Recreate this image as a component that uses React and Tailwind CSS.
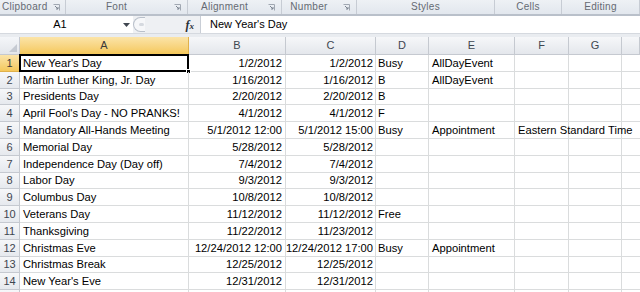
const cols = [
  { id: 'A', w: 'w-[169px]' },
  { id: 'B', w: 'w-[97px]' },
  { id: 'C', w: 'w-[90px]' },
  { id: 'D', w: 'w-[53px]' },
  { id: 'E', w: 'w-[86px]' },
  { id: 'F', w: 'w-[54px]' },
  { id: 'G', w: 'w-[53px]' },
  { id: 'H', w: 'flex-1' },
]

const rows = [
  ['New Year\'s Day', '1/2/2012', '1/2/2012', 'Busy', 'AllDayEvent', ''],
  ['Martin Luther King, Jr. Day', '1/16/2012', '1/16/2012', 'B', 'AllDayEvent', ''],
  ['Presidents Day', '2/20/2012', '2/20/2012', 'B', '', ''],
  ['April Fool\'s Day - NO PRANKS!', '4/1/2012', '4/1/2012', 'F', '', ''],
  ['Mandatory All-Hands Meeting', '5/1/2012 12:00', '5/1/2012 15:00', 'Busy', 'Appointment', 'Eastern Standard Time'],
  ['Memorial Day', '5/28/2012', '5/28/2012', '', '', ''],
  ['Independence Day (Day off)', '7/4/2012', '7/4/2012', '', '', ''],
  ['Labor Day', '9/3/2012', '9/3/2012', '', '', ''],
  ['Columbus Day', '10/8/2012', '10/8/2012', '', '', ''],
  ['Veterans Day', '11/12/2012', '11/12/2012', 'Free', '', ''],
  ['Thanksgiving', '11/22/2012', '11/23/2012', '', '', ''],
  ['Christmas Eve', '12/24/2012 12:00', '12/24/2012 17:00', 'Busy', 'Appointment', ''],
  ['Christmas Break', '12/25/2012', '12/25/2012', '', '', ''],
  ['New Year\'s Eve', '12/31/2012', '12/31/2012', '', '', ''],
]

// rows are ~16.8px tall in the screenshot, so a few get 16px
const shortRows = [2, 7, 12]

const groups = [
  { name: 'Clipboard', w: 'w-[66px]', launcher: true, align: 'justify-start pl-[2px]' },
  { name: 'Font', w: 'w-[122px]', launcher: true, align: 'justify-center' },
  { name: 'Alignment', w: 'w-[94px]', launcher: true, align: 'justify-center' },
  { name: 'Number', w: 'w-[75px]', launcher: true, align: 'justify-center' },
  { name: 'Styles', w: 'w-[138px]', launcher: false, align: 'justify-center' },
  { name: 'Cells', w: 'w-[67px]', launcher: false, align: 'justify-center' },
  { name: 'Editing', w: 'flex-1', launcher: false, align: 'justify-center' },
]

function Launcher() {
  return (
    <svg width="7" height="7" viewBox="0 0 7 7" className="shrink-0">
      <path d="M0.5 0.5h6v6" fill="none" stroke="#a0a7b1" />
      <path d="M2 2l3 3M3 5h2V3" fill="none" stroke="#7d8591" />
    </svg>
  )
}

export default function App() {
  return (
    <div className="w-[640px] h-[292px] overflow-hidden bg-white font-['Liberation_Sans',Arial,sans-serif] text-black">
      {/* ribbon group labels */}
      <div className="h-[14px] flex bg-gradient-to-b from-[#eef1f5] to-[#e2e7ee] border-b-2 border-[#b9c0ca] box-content">
        {groups.map((g) => (
          <div key={g.name} className={`${g.w} h-[14px] flex items-center border-r border-[#c7ccd4]`}>
            <div className={`flex-1 flex ${g.align} text-[10px] leading-none text-[#656a72] tracking-[0.3px]`}>{g.name}</div>
            {g.launcher && (
              <div className="w-[20px] flex justify-center">
                <Launcher />
              </div>
            )}
          </div>
        ))}
      </div>

      {/* formula bar */}
      <div className="h-[17px] flex items-stretch bg-white">
        <div className="w-[120px] flex items-center justify-center text-[11px]">A1</div>
        <div className="w-[13px] flex items-center justify-center">
          <svg width="7" height="4" viewBox="0 0 7 4">
            <path d="M0 0h7L3.5 4z" fill="#3f4650" />
          </svg>
        </div>
        <div className="w-[67px] flex items-center pr-[6px] bg-[#eef0f3]">
          <div className="w-[12px] h-[15px] rounded-l-full border border-r-0 border-[#b9c0ca] bg-[#f6f7f9] flex items-center justify-center">
            <div className="w-[5px] h-[3px] rounded-full bg-[#d5d9df] ml-[4px]" />
          </div>
          <div className="flex-1" />
          <span className="font-['Liberation_Serif',serif] italic text-[12px] font-bold text-[#2a2f36]">f<span className="text-[9px]">x</span></span>
        </div>
        <div className="flex-1 flex items-center pl-[9px] text-[11px] border-l border-[#c9ced6]">New Year's Day</div>
      </div>
      <div className="h-[4px] bg-[#e9ecf0] border-t border-[#d5d9df]" />

      {/* column headers */}
      <div className="h-[18px] flex">
        <div className="w-[20px] bg-gradient-to-b from-[#f4f6f9] to-[#e3e6eb] border-r border-b border-[#c5c9d0] relative">
          <svg width="8" height="8" viewBox="0 0 8 8" className="absolute right-[2px] bottom-[2px]">
            <path d="M8 0V8H0z" fill="#c5cad2" />
          </svg>
        </div>
        {cols.map((c) => (
          <div
            key={c.id}
            className={`${c.w} flex items-center justify-center text-[11px] leading-none border-r border-b ${
              c.id === 'A'
                ? 'bg-gradient-to-b from-[#fbe4a8] to-[#f5c85a] border-[#e0b14a] text-[#3a3a3a]'
                : 'bg-gradient-to-b from-[#f6f7f9] to-[#e4e7ec] border-[#c5c9d0] text-[#3e4650]'
            }`}
          >
            {c.id !== 'H' && c.id}
          </div>
        ))}
      </div>

      {/* grid rows */}
      {rows.concat([['', '', '', '', '', '']]).map((r, i) => (
        <div key={i} className={`${shortRows.includes(i) ? 'h-[16px]' : 'h-[17px]'} flex`}>
          <div
            className={`w-[20px] flex items-center justify-center text-[11px] border-r border-b ${
              i === 0
                ? 'bg-gradient-to-b from-[#fbe4a8] to-[#f5c85a] border-[#e0b14a] text-[#3a3a3a]'
                : 'bg-gradient-to-b from-[#f6f7f9] to-[#e6e9ee] border-[#c5c9d0] text-[#3e4650]'
            }`}
          >
            {i < 14 ? i + 1 : ''}
          </div>
          <div className="w-[169px] relative border-r border-b border-[#dadcdd] flex items-center pl-[3px] text-[11.2px] whitespace-nowrap">
            {r[0]}
            {i === 0 && (
              <>
                <div className="absolute -left-px -top-px right-[-1px] bottom-[-1px] border-2 border-black" />
                <div className="absolute right-[-3px] bottom-[-3px] w-[5px] h-[5px] bg-black border border-white" />
              </>
            )}
          </div>
          <div className="w-[97px] border-r border-b border-[#dadcdd] flex items-center justify-end pr-[3px] text-[11.2px] whitespace-nowrap">{r[1]}</div>
          <div className="w-[90px] border-r border-b border-[#dadcdd] flex items-center justify-end pr-[2px] text-[11.2px] whitespace-nowrap">{r[2]}</div>
          <div className="w-[53px] border-r border-b border-[#dadcdd] flex items-center pl-[2px] text-[11.2px] whitespace-nowrap">{r[3]}</div>
          <div className="w-[86px] border-r border-b border-[#dadcdd] flex items-center pl-[3px] text-[11.2px] whitespace-nowrap">{r[4]}</div>
          <div className="w-[54px] border-r border-b border-[#dadcdd] flex items-center pl-[3px] text-[11.2px] whitespace-nowrap z-10">{r[5]}</div>
          <div className="w-[53px] border-r border-b border-[#dadcdd]" />
          <div className="flex-1 border-b border-[#dadcdd]" />
        </div>
      ))}
    </div>
  )
}
